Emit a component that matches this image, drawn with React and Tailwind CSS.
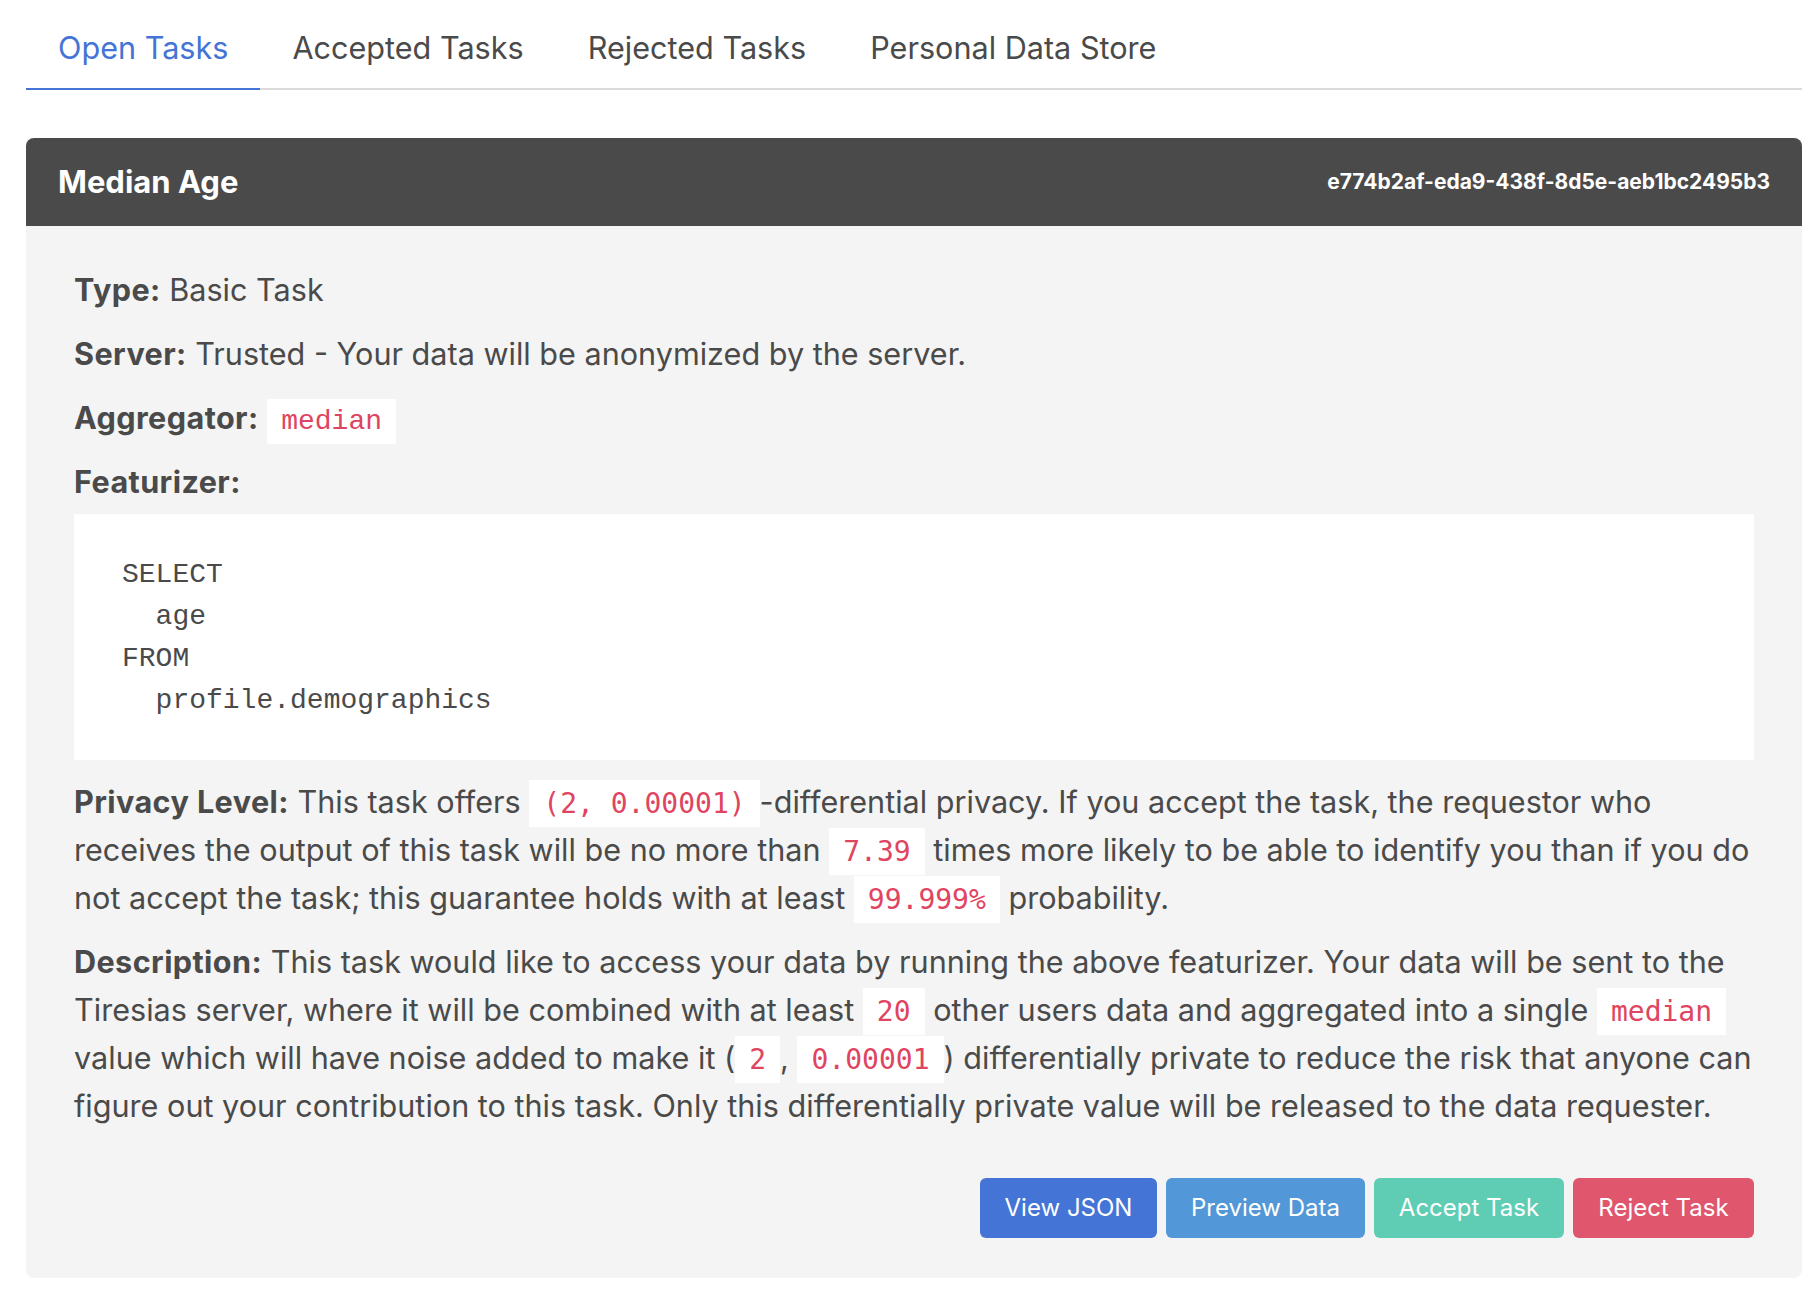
import React from "react";

function C({ children }) {
  return (
    <code className="bg-white text-[#df4460] px-[14px] py-[7px] text-[28px] leading-none font-['DejaVu_Sans_Mono',monospace]">
      {children}
    </code>
  );
}

function L({ children }) {
  return <strong className="font-bold tracking-[0.4px]">{children}</strong>;
}

export default function App() {
  const tabs = ["Open Tasks", "Accepted Tasks", "Rejected Tasks", "Personal Data Store"];
  return (
    <div className="min-h-screen bg-white pl-[26px] pr-[18px] pt-[8px] pb-[20px] font-['Inter',sans-serif] text-[#4a4a4a]">
      <div className="flex border-b-2 border-[#dbdbdb]">
        {tabs.map((t, i) => (
          <a
            key={t}
            className={
              i === 0
                ? "px-[32px] py-[16px] text-[30.6px] leading-[48px] -mb-[2px] border-b-2 border-[#4374d6] text-[#4374d6]"
                : "px-[32px] py-[16px] text-[30.6px] leading-[48px] -mb-[2px] border-b-2 border-[#dbdbdb] text-[#4a4a4a]"
            }
          >
            {t}
          </a>
        ))}
      </div>

      <div className="mt-[48px] rounded-[8px] overflow-hidden bg-[#f4f4f4]">
        <div className="bg-[#4a4a4a] h-[88px] px-[32px] flex items-center justify-between text-white">
          <p className="text-[31px] font-bold leading-[40px]">Median Age</p>
          <p className="text-[21px] font-bold leading-[32px]">e774b2af-eda9-438f-8d5e-aeb1bc2495b3</p>
        </div>
        <div className="px-[48px] pt-[40px] pb-[40px] text-[30.6px] leading-[48px]">
          <p className="mb-[16px]"><L>Type:</L> Basic Task</p>
          <p className="mb-[16px]"><L>Server:</L> Trusted - Your data will be anonymized by the server.</p>
          <p className="mb-[16px]">
            <L>Aggregator:</L>{" "}
            <code className="bg-white text-[#df4460] px-[14px] py-[7px] text-[28px] leading-none font-['Liberation_Mono',monospace]">median</code>
          </p>
          <p className="mb-[8px]"><L>Featurizer:</L></p>
          <pre className="bg-white mb-[18px] pt-[40px] pb-[38px] px-[48px] font-['Liberation_Mono',monospace] text-[28px] leading-[42px] text-[#4a4a4a]">
{`SELECT
  age
FROM
  profile.demographics`}
          </pre>
          <p className="mb-[16px] whitespace-nowrap">
            <L>Privacy Level:</L> This task offers <C>(2, 0.00001)</C>-differential privacy. If you accept the task, the requestor who
            <br />
            receives the output of this task will be no more than <C>7.39</C> times more likely to be able to identify you than if you do
            <br />
            not accept the task; this guarantee holds with at least <C>99.999%</C> probability.
          </p>
          <p className="whitespace-nowrap">
            <L>Description:</L> This task would like to access your data by running the above featurizer. Your data will be sent to the
            <br />
            Tiresias server, where it will be combined with at least <C>20</C> other users data and aggregated into a single <C>median</C>
            <br />
            value which will have noise added to make it (<C>2</C>, <C>0.00001</C>) differentially private to reduce the risk that anyone can
            <br />
            figure out your contribution to this task. Only this differentially private value will be released to the data requester.
          </p>
          <div className="mt-[48px] flex justify-end gap-[9px]">
            <button className="w-[177px] h-[60px] rounded-[6px] bg-[#4374d6] text-white text-[24px]">View JSON</button>
            <button className="w-[199px] h-[60px] rounded-[6px] bg-[#5297d7] text-white text-[24px]">Preview Data</button>
            <button className="w-[190px] h-[60px] rounded-[6px] bg-[#5fcdb4] text-white text-[24px]">Accept Task</button>
            <button className="w-[181px] h-[60px] rounded-[6px] bg-[#e0566c] text-white text-[24px]">Reject Task</button>
          </div>
        </div>
      </div>
    </div>
  );
}
